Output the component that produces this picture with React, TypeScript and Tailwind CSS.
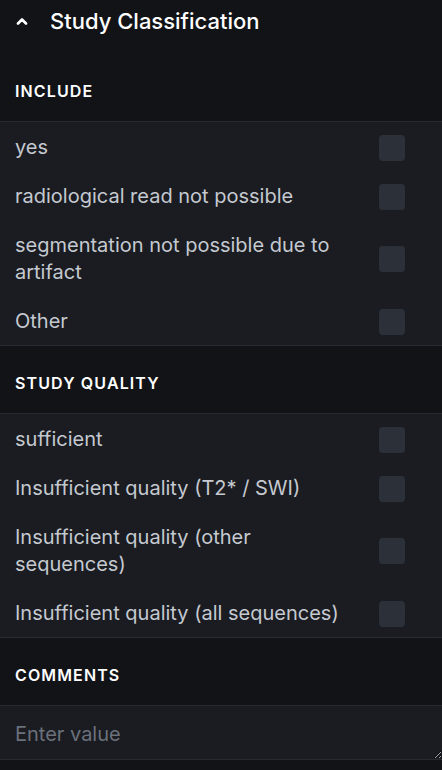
import React from "react";

const include = [
  "yes",
  "radiological read not possible",
  "segmentation not possible due to artifact",
  "Other",
];

const quality = [
  "sufficient",
  "Insufficient quality (T2* / SWI)",
  "Insufficient quality (other sequences)",
  "Insufficient quality (all sequences)",
];

const SectionHeader = ({ label }: { label: string }) => (
  <div className="pt-[27px] pb-[20px] px-[15px] border-b border-[#262a31]">
    <span className="block text-[16px] leading-[20px] font-semibold tracking-[0.07em] text-white">
      {label}
    </span>
  </div>
);

const Option = ({ label }: { label: string }) => (
  <label className="flex items-center justify-between pl-[15px] pr-[37px] pt-[12px] pb-[10px] cursor-pointer">
    <span className="text-[20px] leading-[27px] text-[#c5c9d0] pr-6">{label}</span>
    <span className="shrink-0 w-[26px] h-[26px] rounded-[4px] bg-[#2c3139]" />
  </label>
);

export default function App() {
  return (
    <div
      className="w-[442px] min-h-[770px] bg-[#111317] text-white"
      style={{ fontFamily: "Inter, 'Noto Sans', sans-serif" }}
    >
      <div className="flex items-center h-[54px] pb-[12px]">
        <svg width="12" height="8" viewBox="0 0 12 8" className="ml-[16px]">
          <path d="M2 6.5 L6 2.5 L10 6.5" fill="none" stroke="white" strokeWidth="2.6" strokeLinecap="round" strokeLinejoin="round" />
        </svg>
        <h2 className="ml-[22px] text-[22px] leading-[28px] font-medium text-white">Study Classification</h2>
      </div>

      <div className="border-b border-[#262a31]">
        <SectionHeader label="INCLUDE" />
        <div className="bg-[#1a1c21]">
          {include.map((o) => (
            <Option key={o} label={o} />
          ))}
        </div>
      </div>

      <div className="border-b border-[#262a31]">
        <SectionHeader label="STUDY QUALITY" />
        <div className="bg-[#1a1c21]">
          {quality.map((o) => (
            <Option key={o} label={o} />
          ))}
        </div>
      </div>

      <div>
        <SectionHeader label="COMMENTS" />
        <textarea
          placeholder="Enter value"
          className="block w-full h-[54px] bg-[#1a1c21] px-[15px] pt-[15px] pb-[12px] text-[20px] leading-[27px] text-[#c5c9d0] placeholder:text-[#6b717b] border-b border-[#262a31] outline-none"
        />
      </div>
    </div>
  );
}
